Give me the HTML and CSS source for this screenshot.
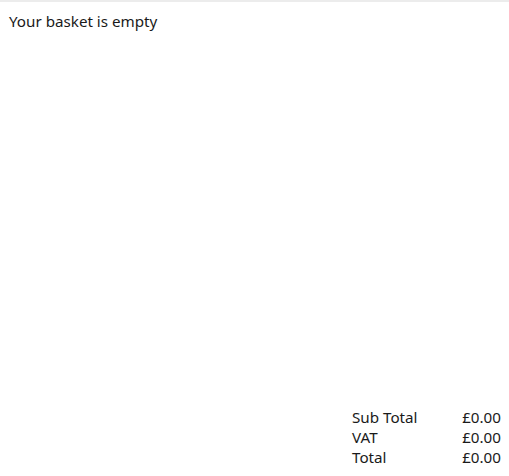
FILE: index.html
```html
<!DOCTYPE html>
<html>
<head>
<meta charset="utf-8">
<link rel="stylesheet" href="styles.css">
</head>
<body>
<div class="basket">
  <div class="empty">Your basket is empty</div>
  <div class="totals">
    <span class="label">Sub Total</span><span class="value">£0.00</span>
    <span class="label">VAT</span><span class="value">£0.00</span>
    <span class="label">Total</span><span class="value">£0.00</span>
  </div>
</div>
</body>
</html>
```
FILE: styles.css
```css
html, body {
  margin: 0;
  padding: 0;
  height: 100%;
  background: #fff;
}
body {
  font-family: "Noto Sans", sans-serif;
  font-size: 15.2px;
  color: #1a1a1a;
}
.basket {
  box-sizing: border-box;
  height: 476px;
  border-top: 2px solid #ececec;
  padding: 8px 8px 9px 9px;
  display: flex;
  flex-direction: column;
  justify-content: space-between;
}
.empty {
  line-height: 22px;
}
.totals {
  align-self: flex-end;
  display: grid;
  grid-template-columns: 107px 42px;
  line-height: 20px;
}
.value {
  text-align: right;
}
```
